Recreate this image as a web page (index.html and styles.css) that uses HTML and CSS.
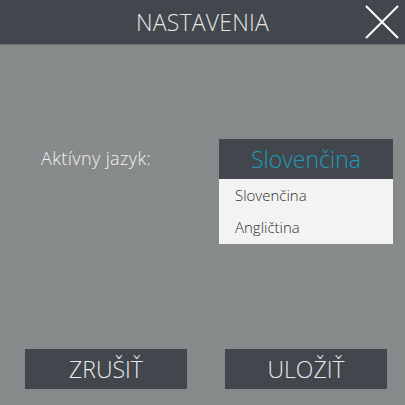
FILE: index.html
```html
<!DOCTYPE html>
<html lang="sk">
<head>
<meta charset="utf-8">
<link rel="stylesheet" href="styles.css">
</head>
<body>
<div class="screen">
  <header class="header">
    <h1 class="title">NASTAVENIA</h1>
    <button class="close" aria-label="Zavrieť">
      <svg width="34" height="34" viewBox="0 0 34 34"><path d="M1 1 L33 33 M33 1 L1 33" stroke="#ffffff" stroke-width="2" fill="none"/></svg>
    </button>
  </header>
  <main class="content">
    <div class="row">
      <span class="label">Aktívny jazyk:</span>
      <div class="select">
        <div class="selected">Slovenčina</div>
        <ul class="options">
          <li>Slovenčina</li>
          <li>Angličtina</li>
        </ul>
      </div>
    </div>
  </main>
  <footer class="actions">
    <button class="btn">ZRUŠIŤ</button>
    <button class="btn">ULOŽIŤ</button>
  </footer>
</div>
</body>
</html>
```
FILE: styles.css
```css
html, body {
  margin: 0;
  padding: 0;
}
body {
  width: 405px;
  height: 405px;
  background: #878a8a;
  font-family: "Open Sans", "Liberation Sans", sans-serif;
  font-weight: 300;
  overflow: hidden;
}
.screen {
  display: flex;
  flex-direction: column;
  height: 405px;
}
.header {
  height: 44px;
  background: #42464d;
  border-bottom: 1px solid #6a6d70;
  display: flex;
  align-items: center;
  justify-content: center;
  position: relative;
}
.title {
  margin: 0;
  font-size: 23px;
  font-weight: 300;
  color: #e4e5e6;
  letter-spacing: 0.2px;
}
.close {
  position: absolute;
  right: 6px;
  top: 5px;
  width: 34px;
  height: 34px;
  padding: 0;
  border: 0;
  background: none;
  display: block;
}
.close svg { display: block; }
.content {
  flex: 1;
  padding: 94px 12px 0 41px;
}
.row {
  display: flex;
  justify-content: space-between;
  align-items: flex-start;
}
.label {
  font-size: 18px;
  color: #f2f2f2;
  margin-top: 7px;
  letter-spacing: 0.4px;
}
.select {
  width: 174px;
}
.selected {
  height: 40px;
  background: #42464d;
  color: #1d9bb8;
  font-size: 23px;
  display: flex;
  align-items: center;
  justify-content: center;
}
.options {
  list-style: none;
  margin: 0;
  padding: 0;
  background: #f3f3f3;
  height: 65px;
}
.options li {
  height: 32px;
  line-height: 32px;
  font-size: 15px;
  color: #2e2e2e;
  padding-left: 16px;
  font-weight: 300;
}
.actions {
  display: flex;
  gap: 38px;
  padding: 0 18px 16px 25px;
}
.btn {
  width: 162px;
  height: 40px;
  border: 0;
  background: #42464d;
  color: #e9eaeb;
  font-family: inherit;
  font-weight: 300;
  font-size: 23px;
  padding: 0;
}
```
